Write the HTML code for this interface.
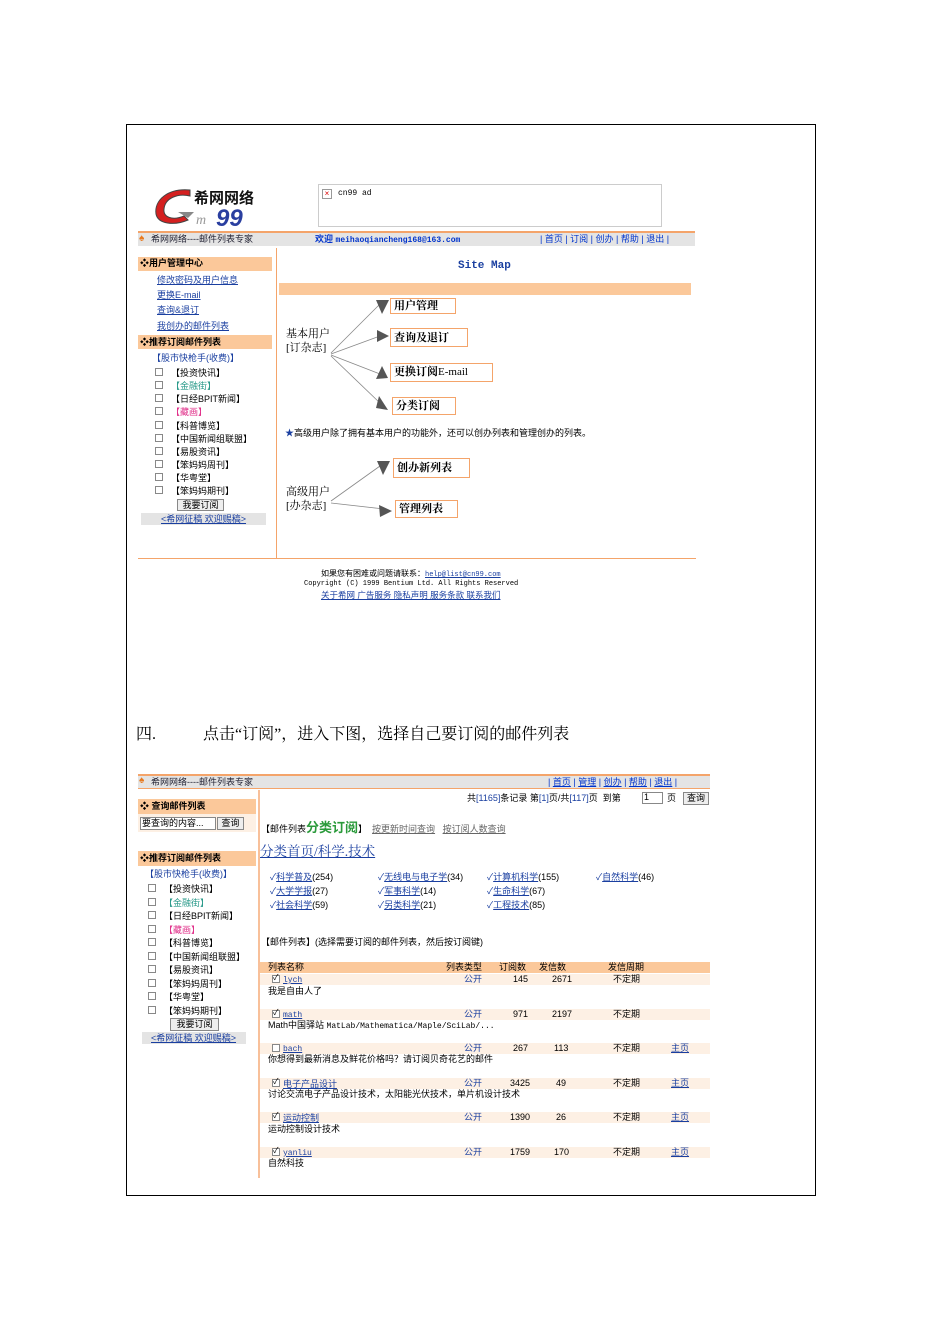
<!DOCTYPE html>
<html><head><meta charset="utf-8">
<style>
*{margin:0;padding:0;box-sizing:border-box}
body{width:950px;height:1344px;background:#fff;position:relative;font-family:"Liberation Sans","Noto Sans CJK SC",sans-serif;font-size:9px;color:#000;overflow:hidden}
.a{position:absolute;white-space:nowrap;line-height:1}
.u{text-decoration:underline}
.bl{color:#1a3fa0}
.nb{color:#0033cc}
.or{background:#fbc89a}
.cb{position:absolute;width:8px;height:8px;border:1px solid #888;background:#fff}
.box{position:absolute;border:1px solid #f4a46a;background:#fff;font-family:"Liberation Serif","Noto Serif CJK SC",serif;font-weight:bold;font-size:11px;padding:2px 3px;line-height:1;white-space:nowrap}
.lbl{position:absolute;font-family:"Liberation Serif","Noto Serif CJK SC",serif;font-size:11px;line-height:14px;white-space:nowrap}
.mono{font-family:"Liberation Mono",monospace}
</style></head><body>
<div style="position:absolute;left:126px;top:124px;width:690px;height:1072px;border:1px solid #000"></div>

<!-- logo -->
<svg class="a" style="left:150px;top:184px" width="120" height="44">
<path d="M40 6 C18 4 4 16 6 30 C8 40 24 42 38 36 L34 32 C22 37 13 33 14 25 C15 14 28 9 40 12 Z" fill="#d42020" stroke="#444" stroke-width="1"/>
<path d="M28 28 L44 28 L38 34 Z" fill="#888"/>
<text x="44" y="19" font-family="Noto Sans CJK SC" font-weight="bold" font-size="15" fill="#111">希网网络</text>
<text x="66" y="42" font-family="Liberation Sans" font-weight="bold" font-style="italic" font-size="24" fill="#2a3fa0">99</text>
<text x="46" y="40" font-family="Liberation Serif" font-style="italic" font-size="14" fill="#999">m</text>
</svg>
<div style="position:absolute;left:318px;top:184px;width:344px;height:43px;border:1px solid #ccc"></div>
<div class="a" style="left:322px;top:189px;width:10px;height:10px;border:1px solid #999;color:#d00;font-size:8px;text-align:center;line-height:8px">×</div>
<div class="a mono" style="left:338px;top:190px;font-size:8px">cn99 ad</div>

<!-- nav top -->
<div style="position:absolute;left:138px;top:231px;width:557px;height:15px;background:#e4e4e4;border-top:2px solid #f4a46a"></div>
<div class="a" style="left:139px;top:234px;color:#e87a20;font-size:10px">♠</div>
<div class="a" style="left:151px;top:235px;color:#223">希网网络----邮件列表专家</div>
<div class="a nb" style="left:315px;top:235px;font-weight:bold">欢迎 <span class="mono" style="font-size:8px">meihaoqiancheng168@163.com</span></div>
<div class="a nb" style="left:540px;top:235px">| 首页 | 订阅 | 创办 | 帮助 | 退出 |</div>

<!-- left col top -->
<div class="a or" style="left:138px;top:257px;width:134px;height:14px"></div>
<div class="a" style="left:140px;top:259px;font-weight:bold">❖用户管理中心</div>
<div class="a u bl" style="left:157px;top:276px">修改密码及用户信息</div>
<div class="a u bl" style="left:157px;top:291px">更换E-mail</div>
<div class="a u bl" style="left:157px;top:306px">查询&amp;退订</div>
<div class="a u bl" style="left:157px;top:322px">我创办的邮件列表</div>
<div class="a or" style="left:138px;top:335px;width:134px;height:14px"></div>
<div class="a" style="left:140px;top:338px;font-weight:bold">❖推荐订阅邮件列表</div>
<div class="a bl" style="left:152px;top:354px">【股市快枪手(收费)】</div>
<div class="cb" style="left:155px;top:368px"></div><div class="a" style="left:171px;top:369px">【投资快讯】</div>
<div class="cb" style="left:155px;top:381px"></div><div class="a" style="left:171px;top:382px;color:#2a9a8a">【金融街】</div>
<div class="cb" style="left:155px;top:394px"></div><div class="a" style="left:171px;top:395px">【日经BPIT新闻】</div>
<div class="cb" style="left:155px;top:407px"></div><div class="a" style="left:171px;top:408px;color:#e0308a">【藏画】</div>
<div class="cb" style="left:155px;top:421px"></div><div class="a" style="left:171px;top:422px">【科普博览】</div>
<div class="cb" style="left:155px;top:434px"></div><div class="a" style="left:171px;top:435px">【中国新闻组联盟】</div>
<div class="cb" style="left:155px;top:447px"></div><div class="a" style="left:171px;top:448px">【易股资讯】</div>
<div class="cb" style="left:155px;top:460px"></div><div class="a" style="left:171px;top:461px">【笨妈妈周刊】</div>
<div class="cb" style="left:155px;top:473px"></div><div class="a" style="left:171px;top:474px">【华粤堂】</div>
<div class="cb" style="left:155px;top:486px"></div><div class="a" style="left:171px;top:487px">【笨妈妈期刊】</div>
<div class="a" style="left:177px;top:499px;width:47px;height:12px;border:1px solid #888;background:#eee;text-align:center;line-height:10px">我要订阅</div>
<div class="a" style="left:141px;top:513px;width:125px;height:12px;background:#e4e4e4"></div>
<div class="a u bl" style="left:161px;top:515px">&lt;希网征稿 欢迎赐稿&gt;</div>

<div style="position:absolute;left:276px;top:248px;width:1px;height:310px;background:#f4a46a"></div>
<div class="a mono" style="left:458px;top:261px;font-size:11px;color:#1a3fa0;font-weight:bold">Site Map</div>
<div class="a or" style="left:279px;top:283px;width:412px;height:12px"></div>

<svg class="a" style="left:276px;top:290px" width="130" height="240">
<g stroke="#888" stroke-width="0.8" fill="none">
<line x1="55" y1="63" x2="104" y2="14"/><line x1="55" y1="64" x2="104" y2="46"/>
<line x1="55" y1="65" x2="104" y2="84"/><line x1="55" y1="66" x2="105" y2="114"/>
<line x1="55" y1="211" x2="104" y2="176"/><line x1="55" y1="213" x2="108" y2="219"/>
</g>
<g fill="#555">
<polygon points="113,10 100,10 106,24"/><polygon points="113,46 101,40 101,52"/>
<polygon points="112,88 100,89 106,76"/><polygon points="112,120 103,106 100,118"/>
<polygon points="114,171 101,171 107,185"/><polygon points="116,221 103,215 104,227"/>
</g></svg>
<div class="box" style="left:390px;top:298px;width:66px;height:16px">用户管理</div>
<div class="box" style="left:390px;top:328px;width:78px;height:19px;padding-top:4px">查询及退订</div>
<div class="box" style="left:390px;top:363px;width:103px;height:19px;padding-top:3px;font-weight:normal"><b>更换订阅</b>E-mail</div>
<div class="box" style="left:392px;top:397px;width:64px;height:18px;padding-top:3px">分类订阅</div>
<div class="box" style="left:393px;top:458px;width:77px;height:20px;padding-top:4px">创办新列表</div>
<div class="box" style="left:395px;top:500px;width:63px;height:18px;padding-top:3px">管理列表</div>
<div class="lbl" style="left:286px;top:327px">基本用户<br>[订杂志]</div>
<div class="lbl" style="left:286px;top:485px">高级用户<br>[办杂志]</div>
<div class="a" style="left:285px;top:429px;color:#1a3fa0">★<span style="color:#000">高级用户除了拥有基本用户的功能外，还可以创办列表和管理创办的列表。</span></div>

<div style="position:absolute;left:138px;top:558px;width:558px;height:1px;background:#f4a46a"></div>
<div class="a" style="left:321px;top:570px;font-size:8px">如果您有困难或问题请联系：<span class="u bl mono" style="font-size:7px">help@list@cn99.com</span></div>
<div class="a mono" style="left:304px;top:581px;font-size:7px">Copyright (C) 1999 Bentium Ltd. All Rights Reserved</div>
<div class="a u bl" style="left:321px;top:591px;font-size:8.5px">关于希网 广告服务 隐私声明 服务条款 联系我们</div>

<div class="a" style="left:136px;top:727px;font-family:'Liberation Serif','Noto Serif CJK SC',serif;font-size:16px">四.</div>
<div class="a" style="left:203px;top:727px;font-family:'Liberation Serif','Noto Serif CJK SC',serif;font-size:16px">点击“订阅”，进入下图，选择自己要订阅的邮件列表</div>

<!-- second screenshot -->
<div style="position:absolute;left:138px;top:774px;width:572px;height:15px;background:#e4e4e4;border-top:2px solid #f4a46a;border-bottom:1px solid #f4a46a"></div>
<div class="a" style="left:139px;top:776px;color:#e87a20;font-size:10px">♠</div>
<div class="a" style="left:151px;top:778px;color:#223">希网网络----邮件列表专家</div>
<div class="a nb" style="left:548px;top:778px">| <span class="u">首页</span> | <span class="u">管理</span> | <span class="u">创办</span> | <span class="u">帮助</span> | <span class="u">退出</span> |</div>

<div style="position:absolute;left:258px;top:790px;width:2px;height:388px;background:#f8c09a"></div>
<div class="a or" style="left:138px;top:799px;width:118px;height:15px"></div>
<div class="a" style="left:140px;top:802px;font-weight:bold">❖ 查询邮件列表</div>
<div class="a" style="left:138px;top:814px;width:118px;height:18px;background:#fdf0e4"></div>
<div class="a" style="left:140px;top:817px;width:76px;height:13px;border:1px solid #888;background:#fff;padding:1px">要查询的内容...</div>
<div class="a" style="left:217px;top:817px;width:27px;height:13px;border:1px solid #888;background:#eee;text-align:center;line-height:11px">查询</div>
<div class="a or" style="left:138px;top:851px;width:118px;height:15px"></div>
<div class="a" style="left:140px;top:854px;font-weight:bold">❖推荐订阅邮件列表</div>
<div class="a bl" style="left:145px;top:870px">【股市快枪手(收费)】</div>
<div class="cb" style="left:148px;top:884px"></div><div class="a" style="left:164px;top:885px">【投资快讯】</div>
<div class="cb" style="left:148px;top:898px"></div><div class="a" style="left:164px;top:899px;color:#2a9a8a">【金融街】</div>
<div class="cb" style="left:148px;top:911px"></div><div class="a" style="left:164px;top:912px">【日经BPIT新闻】</div>
<div class="cb" style="left:148px;top:925px"></div><div class="a" style="left:164px;top:926px;color:#e0308a">【藏画】</div>
<div class="cb" style="left:148px;top:938px"></div><div class="a" style="left:164px;top:939px">【科普博览】</div>
<div class="cb" style="left:148px;top:952px"></div><div class="a" style="left:164px;top:953px">【中国新闻组联盟】</div>
<div class="cb" style="left:148px;top:965px"></div><div class="a" style="left:164px;top:966px">【易股资讯】</div>
<div class="cb" style="left:148px;top:979px"></div><div class="a" style="left:164px;top:980px">【笨妈妈周刊】</div>
<div class="cb" style="left:148px;top:992px"></div><div class="a" style="left:164px;top:993px">【华粤堂】</div>
<div class="cb" style="left:148px;top:1006px"></div><div class="a" style="left:164px;top:1007px">【笨妈妈期刊】</div>
<div class="a" style="left:170px;top:1018px;width:49px;height:13px;border:1px solid #888;background:#eee;text-align:center;line-height:11px">我要订阅</div>
<div class="a" style="left:142px;top:1032px;width:104px;height:12px;background:#e4e4e4"></div>
<div class="a u bl" style="left:151px;top:1034px">&lt;希网征稿 欢迎赐稿&gt;</div>

<div class="a" style="left:467px;top:794px">共<span class="bl">[1165]</span>条记录 第<span class="bl">[1]</span>页/共<span class="bl">[117]</span>页 &nbsp;到第</div>
<div class="a" style="left:642px;top:792px;width:21px;height:12px;border:1px solid #888;background:#fff;padding-left:1px">1</div>
<div class="a" style="left:667px;top:794px">页</div>
<div class="a" style="left:683px;top:792px;width:26px;height:13px;border:1px solid #888;background:#eee;text-align:center;line-height:11px">查询</div>

<div class="a" style="left:261px;top:821px">【邮件列表<span style="color:#2a9a3a;font-size:13px;font-weight:bold">分类订阅</span>】 &nbsp;<span class="u" style="color:#666">按更新时间查询</span> &nbsp; <span class="u" style="color:#666">按订阅人数查询</span></div>
<div class="a u bl" style="left:260px;top:845px;font-size:13.5px;font-family:'Liberation Serif','Noto Serif CJK SC',serif">分类首页/科学.技术</div>

<div class="a" style="left:270px;top:873px"><span class="bl">✓</span><span class="u bl">科学普及</span>(254)</div>
<div class="a" style="left:270px;top:887px"><span class="bl">✓</span><span class="u bl">大学学报</span>(27)</div>
<div class="a" style="left:270px;top:901px"><span class="bl">✓</span><span class="u bl">社会科学</span>(59)</div>
<div class="a" style="left:378px;top:873px"><span class="bl">✓</span><span class="u bl">无线电与电子学</span>(34)</div>
<div class="a" style="left:378px;top:887px"><span class="bl">✓</span><span class="u bl">军事科学</span>(14)</div>
<div class="a" style="left:378px;top:901px"><span class="bl">✓</span><span class="u bl">另类科学</span>(21)</div>
<div class="a" style="left:487px;top:873px"><span class="bl">✓</span><span class="u bl">计算机科学</span>(155)</div>
<div class="a" style="left:487px;top:887px"><span class="bl">✓</span><span class="u bl">生命科学</span>(67)</div>
<div class="a" style="left:487px;top:901px"><span class="bl">✓</span><span class="u bl">工程技术</span>(85)</div>
<div class="a" style="left:596px;top:873px"><span class="bl">✓</span><span class="u bl">自然科学</span>(46)</div>

<div class="a" style="left:261px;top:938px">【邮件列表】(选择需要订阅的邮件列表，然后按订阅键)</div>

<div class="a or" style="left:260px;top:962px;width:450px;height:11px"></div>
<div class="a" style="left:268px;top:963px">列表名称</div>
<div class="a" style="left:446px;top:963px">列表类型</div>
<div class="a" style="left:499px;top:963px">订阅数</div>
<div class="a" style="left:539px;top:963px">发信数</div>
<div class="a" style="left:608px;top:963px">发信周期</div>

<div class="a" style="left:260px;top:974px;width:450px;height:11px;background:#fdf0e4"></div>
<div class="cb" style="left:272px;top:975px"></div><div class="a" style="left:273px;top:974px;font-size:8px">✓</div>
<div class="a u bl mono" style="left:283px;top:977px;font-size:8px">lych</div>
<div class="a bl" style="left:464px;top:975px">公开</div><div class="a" style="left:513px;top:975px">145</div><div class="a" style="left:552px;top:975px">2671</div><div class="a" style="left:613px;top:975px">不定期</div>
<div class="a" style="left:268px;top:987px">我是自由人了</div>

<div class="a" style="left:260px;top:1009px;width:450px;height:11px;background:#fdf0e4"></div>
<div class="cb" style="left:272px;top:1010px"></div><div class="a" style="left:273px;top:1009px;font-size:8px">✓</div>
<div class="a u bl mono" style="left:283px;top:1012px;font-size:8px">math</div>
<div class="a bl" style="left:464px;top:1010px">公开</div><div class="a" style="left:513px;top:1010px">971</div><div class="a" style="left:552px;top:1010px">2197</div><div class="a" style="left:613px;top:1010px">不定期</div>
<div class="a" style="left:268px;top:1021px">Math中国驿站 <span class="mono" style="font-size:8px">MatLab/Mathematica/Maple/SciLab/...</span></div>

<div class="a" style="left:260px;top:1043px;width:450px;height:11px;background:#fdf0e4"></div>
<div class="cb" style="left:272px;top:1044px"></div>
<div class="a u bl mono" style="left:283px;top:1046px;font-size:8px">bach</div>
<div class="a bl" style="left:464px;top:1044px">公开</div><div class="a" style="left:513px;top:1044px">267</div><div class="a" style="left:554px;top:1044px">113</div><div class="a" style="left:613px;top:1044px">不定期</div><div class="a u bl" style="left:671px;top:1044px">主页</div>
<div class="a" style="left:268px;top:1055px">你想得到最新消息及鲜花价格吗？请订阅贝奇花艺的邮件</div>

<div class="a" style="left:260px;top:1078px;width:450px;height:11px;background:#fdf0e4"></div>
<div class="cb" style="left:272px;top:1079px"></div><div class="a" style="left:273px;top:1078px;font-size:8px">✓</div>
<div class="a u bl" style="left:283px;top:1080px">电子产品设计</div>
<div class="a bl" style="left:464px;top:1079px">公开</div><div class="a" style="left:510px;top:1079px">3425</div><div class="a" style="left:556px;top:1079px">49</div><div class="a" style="left:613px;top:1079px">不定期</div><div class="a u bl" style="left:671px;top:1079px">主页</div>
<div class="a" style="left:268px;top:1090px">讨论交流电子产品设计技术，太阳能光伏技术，单片机设计技术</div>

<div class="a" style="left:260px;top:1112px;width:450px;height:11px;background:#fdf0e4"></div>
<div class="cb" style="left:272px;top:1113px"></div><div class="a" style="left:273px;top:1112px;font-size:8px">✓</div>
<div class="a u bl" style="left:283px;top:1114px">运动控制</div>
<div class="a bl" style="left:464px;top:1113px">公开</div><div class="a" style="left:510px;top:1113px">1390</div><div class="a" style="left:556px;top:1113px">26</div><div class="a" style="left:613px;top:1113px">不定期</div><div class="a u bl" style="left:671px;top:1113px">主页</div>
<div class="a" style="left:268px;top:1125px">运动控制设计技术</div>

<div class="a" style="left:260px;top:1147px;width:450px;height:11px;background:#fdf0e4"></div>
<div class="cb" style="left:272px;top:1148px"></div><div class="a" style="left:273px;top:1147px;font-size:8px">✓</div>
<div class="a u bl mono" style="left:283px;top:1150px;font-size:8px">yanliu</div>
<div class="a bl" style="left:464px;top:1148px">公开</div><div class="a" style="left:510px;top:1148px">1759</div><div class="a" style="left:554px;top:1148px">170</div><div class="a" style="left:613px;top:1148px">不定期</div><div class="a u bl" style="left:671px;top:1148px">主页</div>
<div class="a" style="left:268px;top:1159px">自然科技</div>
</body></html>
